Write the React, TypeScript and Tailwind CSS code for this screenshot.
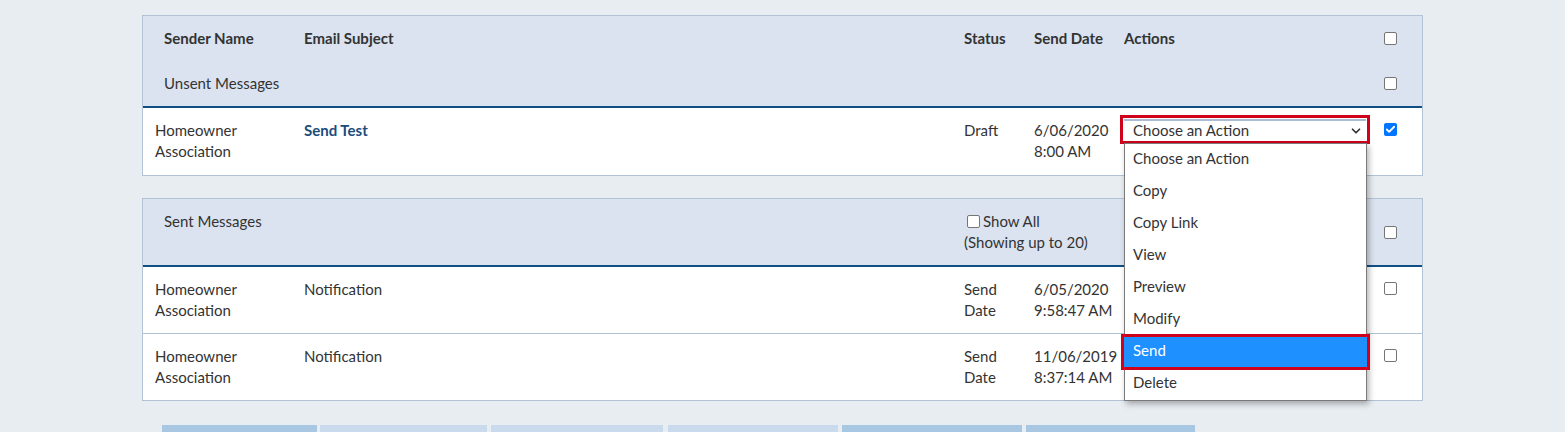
import { Check, ChevronDown } from "lucide-react";

const font = { fontFamily: "Lato, 'Open Sans', sans-serif" };

function Box({ checked = false }: { checked?: boolean }) {
  if (checked) {
    return (
      <span className="flex h-[13px] w-[13px] items-center justify-center rounded-[2px] bg-[#0075ff]">
        <Check className="h-[11px] w-[11px] text-white" strokeWidth={4} />
      </span>
    );
  }
  return <span className="block h-[13px] w-[13px] rounded-[2px] border border-[#767676] bg-white" />;
}

const options = ["Choose an Action", "Copy", "Copy Link", "View", "Preview", "Modify", "Send", "Delete"];

function ActionMenu() {
  return (
    <div className="relative w-[242px]">
      <div className="absolute -left-[4px] -top-[4px] h-[29px] w-[250px] border-[3px] border-[#d0021b]" />
      <div className="flex h-[21px] items-center justify-between border-t-2 border-[#a9bcd4] bg-white pl-[9px] pr-[3px]">
        <span>Choose an Action</span>
        <ChevronDown className="h-[14px] w-[14px] text-[#333]" strokeWidth={3} />
      </div>
      <ul className="absolute left-0 top-[24px] z-10 w-[243px] border border-[#7a7a7a] bg-white shadow-[2px_3px_6px_rgba(0,0,0,0.3)]">
        {options.map((o) =>
          o === "Send" ? (
            <li
              key={o}
              className="relative -mx-[4px] -my-[2px] flex h-[36px] items-center border-[3px] border-[#d0021b] bg-[#1e90ff] pb-[4px] pl-[9px] text-white"
            >
              {o}
            </li>
          ) : (
            <li key={o} className="flex h-[32px] items-center pb-[4px] pl-[8px]">
              {o}
            </li>
          )
        )}
      </ul>
    </div>
  );
}

function Row({
  sender,
  subject,
  status,
  date,
  time,
  bold = false,
  action,
  checked = false,
  last = false,
  short = false,
}: {
  sender: string[];
  subject: string;
  status: string[];
  date: string;
  time: string;
  bold?: boolean;
  action?: boolean;
  checked?: boolean;
  last?: boolean;
  short?: boolean;
}) {
  return (
    <div
      className={`flex ${short ? "h-[66px]" : "h-[67px]"} bg-white pt-[12px] leading-[21px] ${
        last ? "" : "border-b border-[#b3c3d6]"
      }`}
    >
      <div className="w-[161px] pl-[12px]">
        {sender.map((s) => (
          <div key={s}>{s}</div>
        ))}
      </div>
      <div className={`w-[660px] ${bold ? "font-bold text-[#1a4d7c]" : ""}`}>{subject}</div>
      <div className="w-[70px]">
        {status.map((s) => (
          <div key={s}>{s}</div>
        ))}
      </div>
      <div className="w-[90px]">
        <div>{date}</div>
        <div>{time}</div>
      </div>
      <div className="-mt-[1px] w-[260px]">{action ? <ActionMenu /> : null}</div>
      <div className="pt-[3px]">
        <Box checked={checked} />
      </div>
    </div>
  );
}

export default function App() {
  return (
    <div className="min-h-[432px] bg-[#e8edf2] pt-[15px] text-[15px] text-[#333]" style={font}>
      <div className="mx-auto w-[1281px]">
        <div className="border border-[#b3c3d6]">
          <div className="border-b-2 border-[#0f4f86] bg-[#dae3ef]">
            <div className="flex h-[45px] items-center font-bold">
              <div className="w-[161px] pl-[21px]">Sender Name</div>
              <div className="w-[660px]">Email Subject</div>
              <div className="w-[70px]">Status</div>
              <div className="w-[90px]">Send Date</div>
              <div className="w-[260px]">Actions</div>
              <Box />
            </div>
            <div className="flex h-[45px] items-center">
              <div className="w-[1241px] pl-[21px]">Unsent Messages</div>
              <Box />
            </div>
          </div>
          <Row
            sender={["Homeowner", "Association"]}
            subject="Send Test"
            status={["Draft"]}
            date="6/06/2020"
            time="8:00 AM"
            bold
            action
            checked
            last
          />
        </div>

        <div className="mt-[22px] border border-[#b3c3d6]">
          <div className="flex h-[68px] items-center border-b-2 border-[#0f4f86] bg-[#dae3ef] leading-[21px]">
            <div className="w-[821px] self-start pl-[21px] pt-[12px]">Sent Messages</div>
            <div className="w-[420px] self-start pt-[12px]">
              <div className="flex items-center gap-[3px] pl-[3px]">
                <Box />
                <span>Show All</span>
              </div>
              <div>(Showing up to 20)</div>
            </div>
            <Box />
          </div>
          <Row
            sender={["Homeowner", "Association"]}
            subject="Notification"
            status={["Send", "Date"]}
            date="6/05/2020"
            time="9:58:47 AM"
          />
          <Row
            sender={["Homeowner", "Association"]}
            subject="Notification"
            status={["Send", "Date"]}
            date="11/06/2019"
            time="8:37:14 AM"
            last
            short
          />
        </div>

        <div className="mt-[24px] flex pl-[20px]">
          <div className="h-[8px] w-[155px] bg-[#a8c7e3]" />
          <div className="ml-[3px] h-[8px] w-[167px] bg-[#c8daec]" />
          <div className="ml-[4px] h-[8px] w-[172px] bg-[#c8daec]" />
          <div className="ml-[5px] h-[8px] w-[170px] bg-[#c8daec]" />
          <div className="ml-[4px] h-[8px] w-[180px] bg-[#a8c7e3]" />
          <div className="ml-[4px] h-[8px] w-[169px] bg-[#a8c7e3]" />
        </div>
      </div>
    </div>
  );
}
